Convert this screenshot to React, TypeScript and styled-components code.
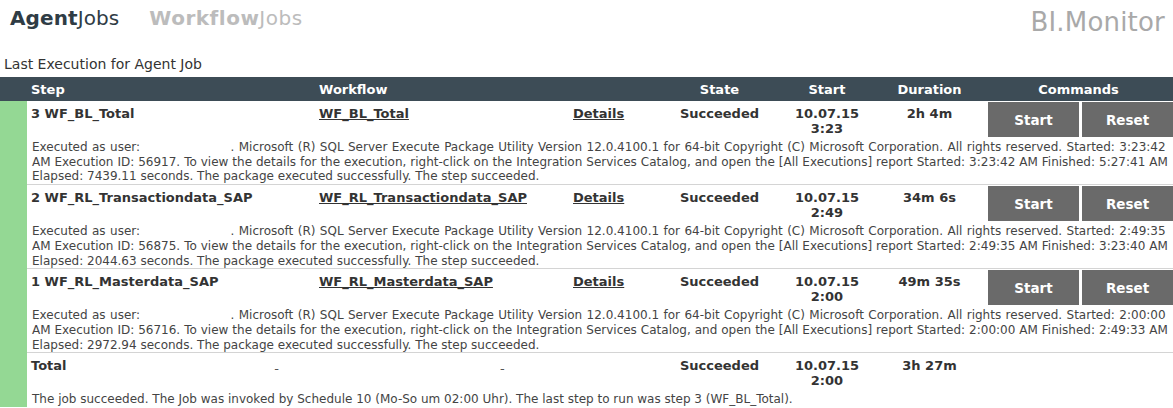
import React from "react";
import styled, { createGlobalStyle } from "styled-components";

const GlobalStyle = createGlobalStyle`
  html, body {
    margin: 0;
    padding: 0;
    background: #ffffff;
  }
  body {
    font-family: "DejaVu Sans", Verdana, sans-serif;
    color: #333;
  }
`;

const Page = styled.div`
  width: 1173px;
  height: 408px;
  overflow: hidden;
`;

const TopBar = styled.div`
  display: flex;
  align-items: flex-start;
  justify-content: space-between;
  padding: 6px 8px 0 10px;
  height: 50px;
  box-sizing: border-box;
`;

const Tabs = styled.div`
  display: flex;
  gap: 30px;
`;

const Tab = styled.div<{ $active?: boolean }>`
  font-size: 20px;
  letter-spacing: ${(p) => (p.$active ? "0.1px" : "0.5px")};
  color: ${(p) => (p.$active ? "#2f3c45" : "#bcbcbc")};
  b {
    font-weight: bold;
  }
`;

const Brand = styled.div`
  font-size: 26px;
  color: #a9a9a9;
  letter-spacing: 0.2px;
  margin-top: 1px;
`;

const Caption = styled.div`
  font-size: 14px;
  color: #333;
  padding: 6px 0 5px 4px;
`;

const Table = styled.table`
  width: 1173px;
  border-collapse: collapse;
  table-layout: fixed;
`;

const HeadCell = styled.th<{ $align?: string }>`
  background: #3d4c56;
  color: #fff;
  font-size: 13px;
  font-weight: bold;
  text-align: ${(p) => p.$align || "left"};
  padding: 4px 4px 3px;
  height: 17px;
`;

const Indicator = styled.td`
  background: #94d894;
  padding: 0;
`;

const Cell = styled.td<{ $align?: string }>`
  font-size: 13px;
  font-weight: bold;
  color: #333;
  vertical-align: top;
  text-align: ${(p) => p.$align || "left"};
  padding: 5px 4px 0;
  height: 33px;
  line-height: 15px;
`;

const LinkText = styled.span`
  text-decoration: underline;
`;

const Dash = styled.span<{ $pad: number }>`
  display: inline-block;
  font-weight: normal;
  color: #555;
  padding-left: ${(p) => p.$pad}px;
  padding-top: 3px;
`;

const TitleWithDash = styled.div`
  display: flex;
  justify-content: space-between;
  padding-right: 32px;
`;

const CommandCell = styled.td`
  padding: 1px 0 2px 4px;
  vertical-align: top;
`;

const Buttons = styled.div`
  display: flex;
  gap: 3px;
`;

const Button = styled.button`
  flex: 1;
  height: 35px;
  border: none;
  background: #6a6a6a;
  color: #fff;
  font-family: "DejaVu Sans", Verdana, sans-serif;
  font-size: 13.5px;
  font-weight: bold;
  padding: 0;
  cursor: pointer;
`;

const Message = styled.td<{ $last?: boolean }>`
  font-size: 12px;
  line-height: 14.7px;
  color: #444;
  padding: 1px 0 0 5px;
  vertical-align: top;
  border-bottom: ${(p) => (p.$last ? "none" : "1px solid #d4d4d4")};
  overflow: hidden;
`;

const Line = styled.div<{ $spread?: number }>`
  white-space: nowrap;
  word-spacing: ${(p) => p.$spread ?? 0}px;
`;

const Redacted = styled.span`
  display: inline-block;
  width: 86px;
`;

type Step = {
  name: string;
  workflow: string;
  start: string;
  duration: string;
  id: string;
  started: string;
  finished: string;
  elapsed: string;
};

const steps: Step[] = [
  {
    name: "3 WF_BL_Total",
    workflow: "WF_BL_Total",
    start: "3:23",
    duration: "2h 4m",
    id: "56917",
    started: "3:23:42",
    finished: "5:27:41",
    elapsed: "7439.11",
  },
  {
    name: "2 WF_RL_Transactiondata_SAP",
    workflow: "WF_RL_Transactiondata_SAP",
    start: "2:49",
    duration: "34m 6s",
    id: "56875",
    started: "2:49:35",
    finished: "3:23:40",
    elapsed: "2044.63",
  },
  {
    name: "1 WF_RL_Masterdata_SAP",
    workflow: "WF_RL_Masterdata_SAP",
    start: "2:00",
    duration: "49m 35s",
    id: "56716",
    started: "2:00:00",
    finished: "2:49:33",
    elapsed: "2972.94",
  },
];

const StepRows = ({ s }: { s: Step }) => (
  <>
    <tr>
      <Indicator rowSpan={2} />
      <Cell>{s.name}</Cell>
      <Cell>
        <LinkText>{s.workflow}</LinkText>
      </Cell>
      <Cell>
        <LinkText>Details</LinkText>
      </Cell>
      <Cell $align="center">Succeeded</Cell>
      <Cell $align="center">
        10.07.15
        <br />
        {s.start}
      </Cell>
      <Cell $align="center">{s.duration}</Cell>
      <CommandCell>
        <Buttons>
          <Button>Start</Button>
          <Button>Reset</Button>
        </Buttons>
      </CommandCell>
    </tr>
    <tr>
      <Message colSpan={7}>
        <Line $spread={0.6}>
          Executed as user: <Redacted />. Microsoft (R) SQL Server Execute Package Utility
          Version 12.0.4100.1 for 64-bit Copyright (C) Microsoft Corporation. All rights
          reserved. Started: {s.started}
        </Line>
        <Line $spread={0.15}>
          AM Execution ID: {s.id}. To view the details for the execution, right-click on the
          Integration Services Catalog, and open the [All Executions] report Started:{" "}
          {s.started} AM Finished: {s.finished} AM
        </Line>
        <Line>
          Elapsed: {s.elapsed} seconds. The package executed successfully. The step
          succeeded.
        </Line>
      </Message>
    </tr>
  </>
);

export default function App() {
  return (
    <Page>
      <GlobalStyle />
      <TopBar>
        <Tabs>
          <Tab $active>
            <b>Agent</b>Jobs
          </Tab>
          <Tab>
            <b>Workflow</b>Jobs
          </Tab>
        </Tabs>
        <Brand>BI.Monitor</Brand>
      </TopBar>
      <Caption>Last Execution for Agent Job</Caption>
      <Table>
        <colgroup>
          <col style={{ width: 27 }} />
          <col style={{ width: 288 }} />
          <col style={{ width: 254 }} />
          <col style={{ width: 91 }} />
          <col style={{ width: 119 }} />
          <col style={{ width: 96 }} />
          <col style={{ width: 109 }} />
          <col style={{ width: 189 }} />
        </colgroup>
        <thead>
          <tr>
            <HeadCell />
            <HeadCell>Step</HeadCell>
            <HeadCell>Workflow</HeadCell>
            <HeadCell />
            <HeadCell $align="center">State</HeadCell>
            <HeadCell $align="center">Start</HeadCell>
            <HeadCell $align="center">Duration</HeadCell>
            <HeadCell $align="center">Commands</HeadCell>
          </tr>
        </thead>
        <tbody>
          {steps.map((s) => (
            <StepRows key={s.id} s={s} />
          ))}
          <tr>
            <Indicator rowSpan={2} />
            <Cell>
              <TitleWithDash>
                Total
                <Dash $pad={0}>-</Dash>
              </TitleWithDash>
            </Cell>
            <Cell>
              <Dash $pad={181}>-</Dash>
            </Cell>
            <Cell />
            <Cell $align="center">Succeeded</Cell>
            <Cell $align="center">
              10.07.15
              <br />
              2:00
            </Cell>
            <Cell $align="center">3h 27m</Cell>
            <Cell />
          </tr>
          <tr>
            <Message colSpan={7} $last>
              <Line>
                The job succeeded. The Job was invoked by Schedule 10 (Mo-So um 02:00 Uhr).
                The last step to run was step 3 (WF_BL_Total).
              </Line>
            </Message>
          </tr>
        </tbody>
      </Table>
    </Page>
  );
}
